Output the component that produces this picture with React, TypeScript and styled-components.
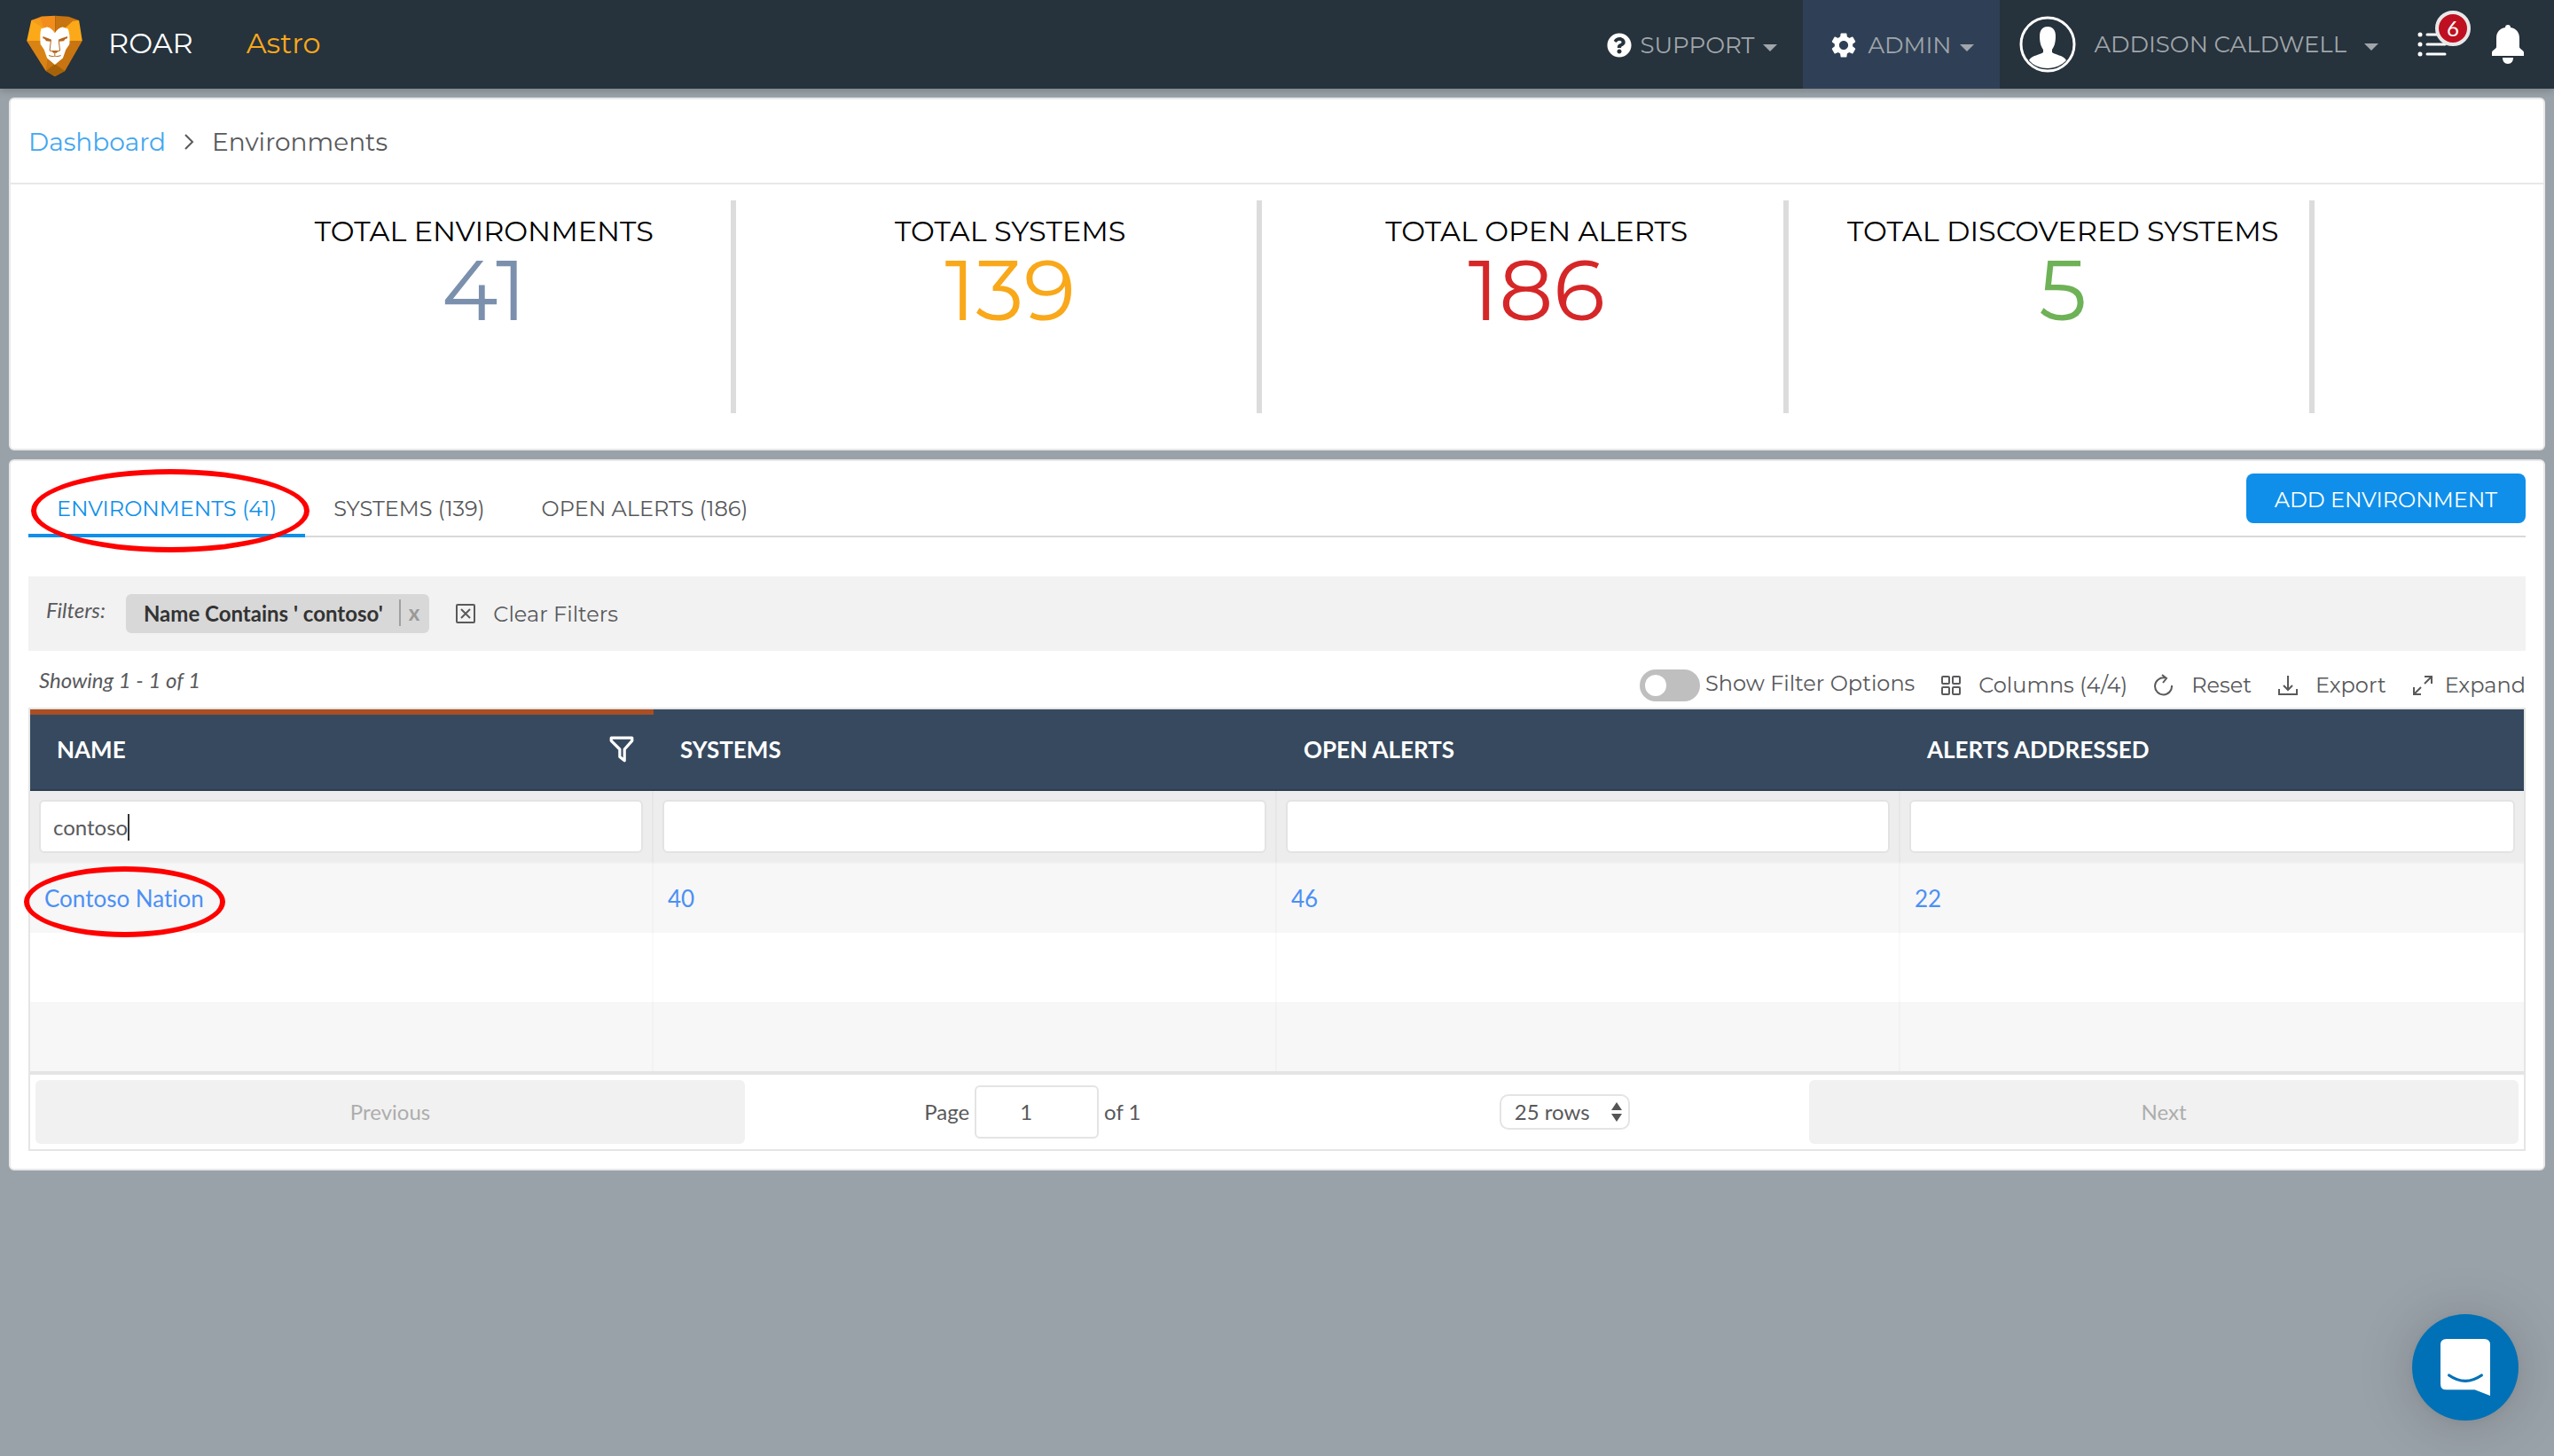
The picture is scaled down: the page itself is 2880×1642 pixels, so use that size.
import React, { useState } from 'react';
import styled, { createGlobalStyle } from 'styled-components';
import { FaQuestionCircle } from 'react-icons/fa';
import { MdSettings } from 'react-icons/md';

const display = '"Montserrat", "Inter", sans-serif';
const body = '"Lato", sans-serif';

const GlobalStyle = createGlobalStyle`
  *, *::before, *::after { box-sizing: border-box; }
  body {
    margin: 0;
    background: #9aa2a9;
    color: #58595b;
    font-family: ${display};
    font-weight: 400;
    font-size: 24px;
  }
  button, input, select { font: inherit; color: inherit; margin: 0; }
  button { border: 0; background: none; padding: 0; cursor: pointer; }
  a { text-decoration: none; }
`;

/* ---------- top bar ---------- */

const TopBar = styled.header`
  display: flex;
  align-items: center;
  height: 100px;
  padding: 0 34px 0 30px;
  background: #26323c;
  box-shadow: 0 2px 8px rgba(0, 0, 0, 0.22);
`;

const Brand = styled.a`
  display: flex;
  align-items: center;
  gap: 28px;
  color: #fff;
  font-size: 32px;
  line-height: 36px;
  padding-bottom: 2px;
  svg { overflow: visible; }
`;

const Product = styled.span`
  margin-left: 60px;
  padding-bottom: 2px;
  color: #f9a81a;
  font-size: 32px;
  line-height: 36px;
`;

const TopNav = styled.nav`
  display: flex;
  align-items: center;
  height: 100%;
  margin-left: auto;
`;

const NavButton = styled.button<{ $active?: boolean }>`
  display: flex;
  align-items: center;
  gap: 10px;
  height: 100%;
  padding: 2px 29px 0;
  background: ${(p) => (p.$active ? '#2f4056' : 'transparent')};
  color: #a0a6aa;
  font-size: 26px;
  > svg:first-child { color: #fff; }
`;

const UserButton = styled(NavButton)`
  gap: 20px;
  padding: 0 44px 0 22px;
`;

const CaretIcon = styled.svg`
  width: 16px;
  height: 8px;
  margin-top: 6px;
  fill: #a0a6aa;
`;

const IconButton = styled.button`
  position: relative;
  display: flex;
  & + & { margin-left: 50px; }
`;

const Badge = styled.span`
  position: absolute;
  left: 20px;
  top: -24px;
  display: grid;
  place-items: center;
  width: 40px;
  height: 40px;
  border: 4px solid #e8e8e8;
  border-radius: 50%;
  background: #bf1021;
  color: #fff;
  font-family: ${body};
  font-size: 24px;
  line-height: 32px;
`;

/* ---------- panels ---------- */

const Page = styled.main`
  display: flex;
  flex-direction: column;
  gap: 10px;
  padding: 10px;
`;

const Panel = styled.section`
  border: 2px solid #e8e8e8;
  border-radius: 6px;
  background: #fff;
`;

const Breadcrumb = styled.nav`
  display: flex;
  align-items: center;
  gap: 20px;
  height: 96px;
  padding: 2px 20px 0;
  border-bottom: 2px solid #e8e8e8;
  font-size: 28px;
  a { color: #44a7f0; }
`;

const Stats = styled.div`
  display: grid;
  grid-template-columns: 448fr repeat(4, 1187fr) 516fr;
  padding: 18px 0 40px;
`;

const Stat = styled.div`
  height: 240px;
  padding: 17px 0 0 32px;
  border-right: 6px solid #dcdcdc;
  text-align: center;
  &:first-child { grid-column: 2; }
`;

const StatLabel = styled.div`
  color: #000;
  font-size: 32px;
  line-height: 36px;
  white-space: nowrap;
`;

const StatValue = styled.div<{ $color: string }>`
  color: ${(p) => p.$color};
  font-size: 96px;
  line-height: 96px;
`;

const Content = styled(Panel)`
  padding: 0 20px 20px;
`;

const TabRow = styled.div`
  display: flex;
  align-items: flex-end;
  justify-content: space-between;
  height: 86px;
  border-bottom: 2px solid #d9d9d9;
`;

const Tabs = styled.div`
  display: flex;
  margin-bottom: -2px;
`;

const Tab = styled.button<{ $active?: boolean }>`
  position: relative;
  height: 60px;
  padding: 0 32px 2px;
  border-bottom: 4px solid ${(p) => (p.$active ? '#0f8fea' : 'transparent')};
  color: ${(p) => (p.$active ? '#0f8fea' : '#58595b')};
`;

const Highlight = styled.span`
  position: absolute;
  border: 6px solid #f00;
  border-radius: 50%;
  pointer-events: none;
`;

const TabHighlight = styled(Highlight)`
  inset: -17px -5px -21px 3px;
`;

const LinkHighlight = styled(Highlight)`
  inset: -20px -24px -28px -23px;
`;

const PrimaryButton = styled.button`
  align-self: flex-start;
  height: 56px;
  margin-top: 14px;
  padding: 2px 32px 0;
  border-radius: 8px;
  background: #0f8fea;
  color: #fff;
`;

const FilterBar = styled.div`
  display: flex;
  align-items: center;
  height: 84px;
  margin-top: 44px;
  padding-left: 20px;
  background: #f2f2f2;
`;

const Note = styled.span`
  font-family: ${body};
  font-style: italic;
`;

const FilterNote = styled(Note)`
  padding-bottom: 10px;
`;

const Chip = styled.span`
  display: flex;
  align-items: center;
  height: 44px;
  margin: 0 30px 0 23px;
  padding: 0 0 2px 20px;
  border-radius: 6px;
  background: #d8d8d8;
  color: #333;
  font-family: ${body};
  font-weight: 700;
`;

const ChipClose = styled.button`
  height: 30px;
  margin-left: 18px;
  padding: 0 11px 0 9px;
  border-left: 2px solid #a0a0a0;
  color: #999;
  line-height: 28px;
`;

const ToolButton = styled.button<{ $tight?: boolean }>`
  display: flex;
  align-items: center;
  gap: ${(p) => (p.$tight ? 14 : 20)}px;
  white-space: nowrap;
`;

const ToolIcon = styled.svg`
  width: 22px;
  height: 22px;
  overflow: visible;
  fill: none;
  stroke: #58595b;
  stroke-width: 2;
`;

const ToolRow = styled.div`
  display: flex;
  align-items: center;
  justify-content: space-between;
  height: 64px;
  padding-left: 12px;
`;

const Tools = styled.div`
  display: flex;
  align-items: center;
  gap: 30px;
  padding-top: 13px;
`;

const ToggleLabel = styled.label`
  display: flex;
  gap: 6px;
  line-height: 32px;
`;

const Toggle = styled.input`
  appearance: none;
  width: 68px;
  height: 36px;
  border-radius: 18px;
  background: #bfbfbf;
  &::before {
    content: '';
    display: block;
    width: 24px;
    height: 24px;
    margin: 6px;
    border-radius: 50%;
    background: #fff;
  }
  &:checked { background: #0f8fea; }
  &:checked::before { margin-left: 38px; }
`;

/* ---------- table ---------- */

const Grid = styled.div`
  border: 2px solid #e5e5e5;
  font-family: ${body};
  font-variant-ligatures: none;
`;

const Table = styled.table`
  width: 100%;
  table-layout: fixed;
  border-collapse: separate;
  border-spacing: 0;
`;

const HeadCell = styled.th<{ $sorted?: boolean }>`
  height: 92px;
  padding: 0 22px 0 30px;
  border-bottom: 2px solid #2d3e51;
  background: #36495e;
  box-shadow: ${(p) => (p.$sorted ? 'inset 0 6px #a94f23' : 'none')};
  color: #fff;
  font-size: 26px;
  font-weight: 700;
  text-align: left;
`;

const HeadContent = styled.div`
  display: flex;
  align-items: center;
  justify-content: space-between;
`;

const FilterCell = styled.td`
  padding: 10px;
  border-right: 2px solid #e6e6e6;
  border-bottom: 2px solid #f1f1f1;
  background: #ededed;
  &:last-child { border-right: 0; }
`;

const FilterField = styled.div`
  position: relative;
  display: flex;
`;

const FilterInput = styled.input`
  width: 100%;
  height: 60px;
  padding: 0 14px;
  border: 2px solid #e3e3e3;
  border-radius: 6px;
  background: #fff;
  font-size: 24px;
  outline: 0;
`;

const TextCursor = styled.span`
  position: absolute;
  left: 100px;
  top: 16px;
  width: 2px;
  height: 30px;
  background: #333;
`;

const Row = styled.tr`
  background: #fff;
  &:nth-child(odd) { background: #f7f7f7; }
`;

const Cell = styled.td`
  height: 78px;
  padding: 0 16px;
  border-right: 2px solid rgba(0, 0, 0, 0.02);
  &:last-child { border-right: 0; }
`;

const CellLink = styled.a`
  position: relative;
  color: #4b90f5;
  font-size: 26px;
`;

const Pager = styled.div`
  display: grid;
  grid-template-columns: 2fr 3fr 2fr;
  padding: 6px;
  border-top: 4px solid #e4e4e4;
`;

const PagerButton = styled.button`
  height: 72px;
  padding-bottom: 2px;
  border-radius: 6px;
  background: #f1f1f1;
  color: #adadad;
`;

const PagerMiddle = styled.div`
  display: flex;
  align-items: center;
  justify-content: space-around;
`;

const PageJump = styled.label`
  display: flex;
  align-items: center;
  gap: 6px;
`;

const PageText = styled.span`
  padding-bottom: 2px;
`;

const PageInput = styled.input`
  width: 140px;
  height: 60px;
  padding: 0 24px 2px 0;
  border: 2px solid #e4e4e4;
  border-radius: 6px;
  text-align: center;
`;

const SelectWrap = styled.div`
  position: relative;
`;

const RowsSelect = styled.select`
  appearance: none;
  display: block;
  width: 147px;
  height: 40px;
  padding: 0 0 2px 15px;
  border: 2px solid #e4e4e4;
  border-radius: 10px;
  background: #fff;
`;

const SelectArrows = styled.svg`
  position: absolute;
  right: 9px;
  top: 9px;
  width: 12px;
  height: 22px;
  fill: #555;
  pointer-events: none;
`;

const ChatButton = styled.button`
  position: fixed;
  right: 40px;
  bottom: 40px;
  width: 120px;
  height: 120px;
  border-radius: 50%;
  background: #0071b6;
  box-shadow: 0 2px 12px rgba(0, 0, 0, 0.06), 0 4px 64px rgba(0, 0, 0, 0.18);
`;

/* ---------- drawings ---------- */

const LionLogo = () => (
  <svg width="64" height="70" viewBox="30 13 189 208" role="img" aria-label="Lion logo">
    <path fill="#f28d1c" d="M45 40 80 26 125 24v80L45 40Z" />
    <path fill="#c87410" d="M205 40 170 27 125 24v80l80-64Z" />
    <path fill="#fba919" d="M45 40 30 108h60V66L64 42ZM205 40 216 108h-58V66l26-24Z" />
    <path fill="#f49a1c" d="m45 40 30-8 14 36Z" />
    <path fill="#c87410" d="M30 108h186l-58 101-34 19-30-19Z" />
    <path fill="#d98314" d="M30 108h48l22 58-6 43Z" />
    <path fill="#a66208" d="m124 186 34 23-34 19-30-19Z" />
    <path fill="#fff" d="M78 68 98 62q16 3 26 20 10-17 26-20l18 6q8 20 5 52l-12 18-10 28-27 22-26-22-10-28-12-18q-3-34 2-52Z" />
    <path fill="#b5671c" d="m84 93 18 7 11 4-4 6-14-1-5-7-6-2ZM166 93l-20 7-10 4 4 6 14-1 5-7 7-2Z" />
    <path fill="none" stroke="#b5671c" strokeWidth="3" d="m111 106-4 34 6 4M137 106l4 34-6 4M124 148v12M104 157q10 5 20 2 10 3 20-2" />
    <path fill="#b5671c" d="M112 141h25l-7 8h-11Z" />
  </svg>
);

const Caret = () => (
  <CaretIcon viewBox="0 0 16 8" aria-hidden="true"><path d="M0 0h16L8 8Z" /></CaretIcon>
);

const Avatar = () => (
  <svg width="64" height="64" viewBox="0 0 64 64" aria-hidden="true">
    <circle cx="32" cy="32" r="30" fill="none" stroke="#fff" strokeWidth="3" />
    <path fill="#fff" d="M32 12c-6 0-9 4-9 11 0 8 2 12 4 15v3c-3 3-13 3-16 9 5 6 13 9 21 9s17-4 21-9c-3-6-13-6-16-9v-3c2-3 4-7 4-15 0-7-3-11-9-11Z" />
  </svg>
);

const ListIcon = () => (
  <svg width="34" height="28" viewBox="0 0 34 28" fill="none" stroke="#fff" strokeLinecap="round" aria-hidden="true">
    <path strokeWidth="3" d="M11 3h20M11 14h20M11 25h20" />
    <path strokeWidth="5" d="M3 3h.01M3 14h.01M3 25h.01" />
  </svg>
);

const BellIcon = () => (
  <svg width="36" height="44" viewBox="0 0 36 44" fill="#fff" aria-hidden="true">
    <path d="M18 0c2 0 3 1 3 3 6 1 10 5 10 12v10c0 2 5 4 5 6v4H0v-4c0-2 5-4 5-6V15C5 8 9 4 15 3c0-2 1-3 3-3ZM12 37h12c0 4-2 7-6 7s-6-3-6-7Z" />
  </svg>
);

const ClearIcon = () => (
  <ToolIcon viewBox="0 0 22 22" aria-hidden="true">
    <rect x="1" y="1" width="20" height="20" rx="1" />
    <path d="m6 6 10 10M16 6 6 16" />
  </ToolIcon>
);

const ColumnsIcon = () => (
  <ToolIcon viewBox="0 0 22 22" aria-hidden="true">
    <rect x="1" y="1" width="8" height="8" rx="1" />
    <rect x="13" y="1" width="8" height="8" rx="1" />
    <rect x="1" y="13" width="8" height="8" rx="1" />
    <rect x="13" y="13" width="8" height="8" rx="1" />
  </ToolIcon>
);

const ResetIcon = () => (
  <ToolIcon viewBox="0 0 22 22" aria-hidden="true">
    <path d="M20 11a9.500 9.500 0 1 1-8-8.500M9-1l5 4-4 5" />
  </ToolIcon>
);

const ExportIcon = () => (
  <ToolIcon viewBox="0 0 22 22" aria-hidden="true"><path d="M11 0v15M6 11l5 5 5-5M1 15v6h20v-6" /></ToolIcon>
);

const ExpandIcon = () => (
  <ToolIcon viewBox="0 0 22 22" aria-hidden="true"><path d="M13 1h8v8M21 1l-8 8M1 13v8h8M1 21l8-8" /></ToolIcon>
);

const FunnelIcon = () => (
  <svg width="28" height="30" viewBox="0 0 26 28" fill="none" stroke="#fff" strokeWidth="3" strokeLinejoin="round" aria-hidden="true">
    <path d="M2 2h22v3l-8 9v12l-5-4v-8L2 5Z" />
  </svg>
);

const ChatIcon = () => (
  <svg width="120" height="120" viewBox="0 0 360 360" aria-hidden="true">
    <path fill="#fff" d="M116 84h128q20 0 20 20v172l-52-20h-96q-20 0-20-20V104q0-20 20-20Z" />
    <path fill="none" stroke="#0071b6" strokeWidth="10" strokeLinecap="round" d="M125 207q55 38 110 0" />
  </svg>
);

/* ---------- data ---------- */

const stats = [
  { label: 'TOTAL ENVIRONMENTS', value: 41, color: '#7b90ad' },
  { label: 'TOTAL SYSTEMS', value: 139, color: '#f9a81a' },
  { label: 'TOTAL OPEN ALERTS', value: 186, color: '#d62728' },
  { label: 'TOTAL DISCOVERED SYSTEMS', value: 5, color: '#6eb257' },
];

const tabs = ['ENVIRONMENTS (41)', 'SYSTEMS (139)', 'OPEN ALERTS (186)'];
const columns = ['NAME', 'SYSTEMS', 'OPEN ALERTS', 'ALERTS ADDRESSED'];
const rows = [['Contoso Nation', '40', '46', '22'], ['', '', '', ''], ['', '', '', '']];

export default function App() {
  const [nameFilter, setNameFilter] = useState('contoso');

  return (
    <>
      <GlobalStyle />
      <TopBar>
        <Brand href="#"><LionLogo />ROAR</Brand>
        <Product>Astro</Product>
        <TopNav aria-label="Account">
          <NavButton><FaQuestionCircle size={28} />SUPPORT<Caret /></NavButton>
          <NavButton $active><MdSettings size={34} />ADMIN<Caret /></NavButton>
          <UserButton><Avatar />ADDISON CALDWELL<Caret /></UserButton>
          <IconButton aria-label="Tasks"><ListIcon /><Badge>6</Badge></IconButton>
          <IconButton aria-label="Notifications"><BellIcon /></IconButton>
        </TopNav>
      </TopBar>

      <Page>
        <Panel>
          <Breadcrumb aria-label="Breadcrumb">
            <a href="#">Dashboard</a>
            <svg width="12" height="18" viewBox="0 0 12 18" fill="none" stroke="#58595b" strokeWidth="2" aria-hidden="true">
              <path d="m2 1 8 8-8 8" />
            </svg>
            <span>Environments</span>
          </Breadcrumb>
          <Stats>
            {stats.map((s) => (
              <Stat key={s.label}>
                <StatLabel>{s.label}</StatLabel>
                <StatValue $color={s.color}>{s.value}</StatValue>
              </Stat>
            ))}
          </Stats>
        </Panel>

        <Content>
          <TabRow>
            <Tabs role="tablist">
              {tabs.map((t, i) => (
                <Tab key={t} role="tab" aria-selected={i === 0} $active={i === 0}>
                  {t}
                  {i === 0 && <TabHighlight />}
                </Tab>
              ))}
            </Tabs>
            <PrimaryButton>ADD ENVIRONMENT</PrimaryButton>
          </TabRow>

          <FilterBar>
            <FilterNote>Filters:</FilterNote>
            <Chip>
              Name Contains ' contoso'
              <ChipClose aria-label="Remove filter">x</ChipClose>
            </Chip>
            <ToolButton><ClearIcon />Clear Filters</ToolButton>
          </FilterBar>

          <ToolRow>
            <Note>Showing 1 - 1 of 1</Note>
            <Tools>
              <ToggleLabel><Toggle type="checkbox" />Show Filter Options</ToggleLabel>
              <ToolButton><ColumnsIcon />Columns (4/4)</ToolButton>
              <ToolButton><ResetIcon />Reset</ToolButton>
              <ToolButton><ExportIcon />Export</ToolButton>
              <ToolButton $tight><ExpandIcon />Expand</ToolButton>
            </Tools>
          </ToolRow>

          <Grid>
            <Table>
              <thead>
                <tr>
                  {columns.map((c, i) => (
                    <HeadCell key={c} scope="col" $sorted={i === 0}>
                      <HeadContent>{c}{i === 0 && <FunnelIcon />}</HeadContent>
                    </HeadCell>
                  ))}
                </tr>
                <tr>
                  {columns.map((c, i) => (
                    <FilterCell key={c}>
                      <FilterField>
                        {i === 0 ? (
                          <>
                            <FilterInput
                              aria-label="Filter NAME"
                              value={nameFilter}
                              onChange={(e) => setNameFilter(e.target.value)}
                            />
                            <TextCursor />
                          </>
                        ) : (
                          <FilterInput aria-label={`Filter ${c}`} />
                        )}
                      </FilterField>
                    </FilterCell>
                  ))}
                </tr>
              </thead>
              <tbody>
                {rows.map((row, r) => (
                  <Row key={r}>
                    {row.map((value, c) => (
                      <Cell key={c}>
                        {value && (
                          <CellLink href="#">
                            {value}
                            {c === 0 && <LinkHighlight />}
                          </CellLink>
                        )}
                      </Cell>
                    ))}
                  </Row>
                ))}
              </tbody>
            </Table>
            <Pager>
              <PagerButton disabled>Previous</PagerButton>
              <PagerMiddle>
                <PageJump>
                  <PageText>Page</PageText>
                  <PageInput inputMode="numeric" defaultValue="1" />
                  <PageText>of 1</PageText>
                </PageJump>
                <SelectWrap>
                  <RowsSelect aria-label="Rows per page" defaultValue="25">
                    <option value="25">25 rows</option>
                    <option value="50">50 rows</option>
                    <option value="100">100 rows</option>
                  </RowsSelect>
                  <SelectArrows viewBox="0 0 12 22" aria-hidden="true"><path d="M6 0l6 9H0ZM6 22l6-9H0Z" /></SelectArrows>
                </SelectWrap>
              </PagerMiddle>
              <PagerButton disabled>Next</PagerButton>
            </Pager>
          </Grid>
        </Content>
      </Page>

      <ChatButton aria-label="Open chat"><ChatIcon /></ChatButton>
    </>
  );
}
